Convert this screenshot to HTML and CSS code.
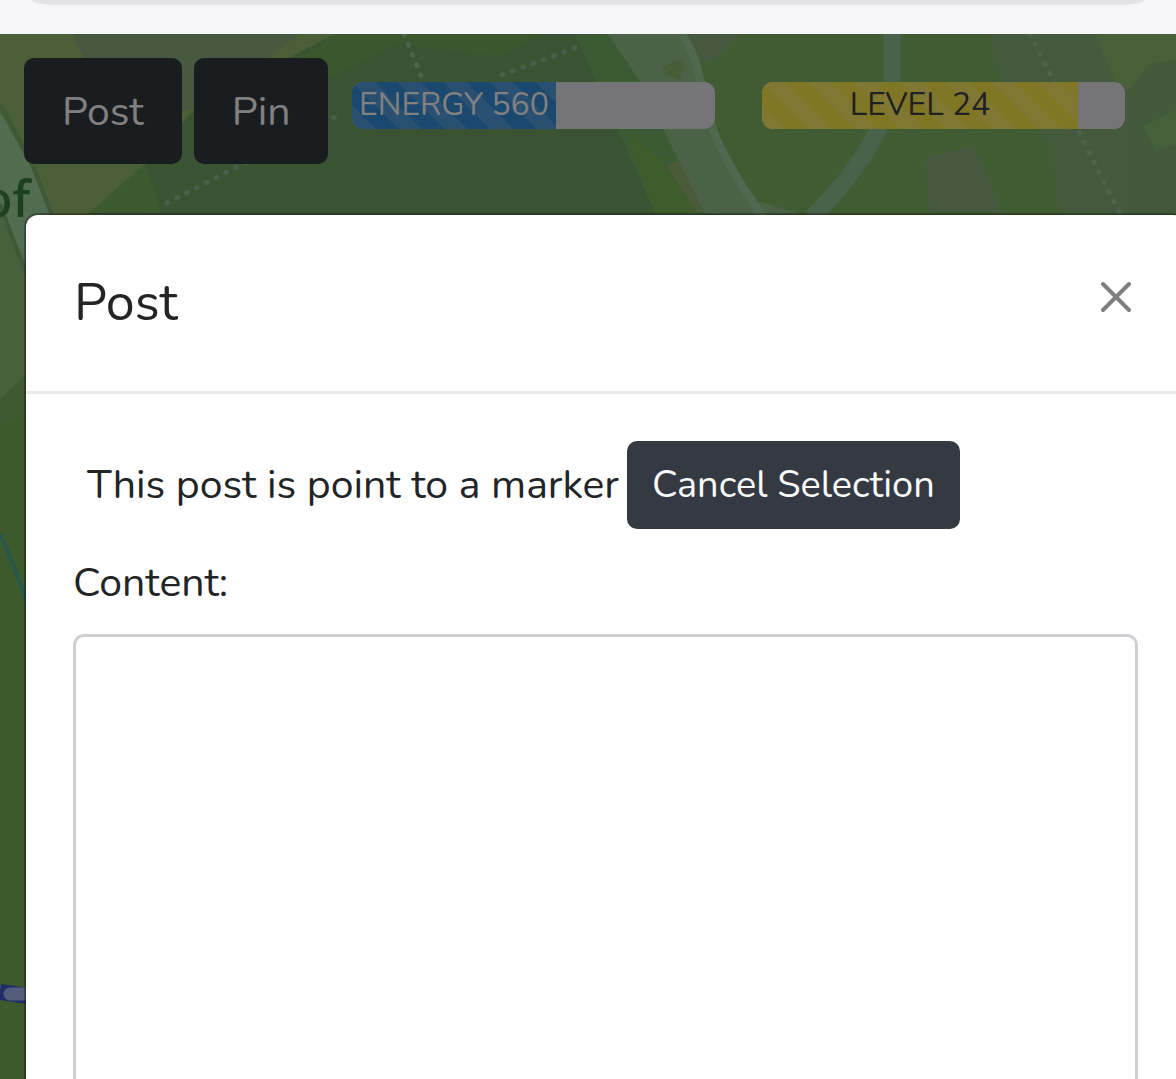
FILE: index.html
```html
<!DOCTYPE html>
<html lang="en">
<head>
<meta charset="utf-8">
<meta name="viewport" content="width=device-width, initial-scale=1">
<title>Post</title>
<link rel="stylesheet" href="styles.css">
</head>
<body>
<header class="browser-bar"><div class="address"></div></header>
<main class="world">
  <svg class="map" viewBox="0 0 1176 1045" preserveAspectRatio="xMinYMin slice" aria-hidden="true">
    <rect width="1176" height="1045" fill="#3d5a2d"/>
    <!-- woods and fields -->
    <path d="M0 0H400L90 190H0Z" fill="#4a5e38"/>
    <path d="M72 0H300L195 75H110Z" fill="#475840"/>
    <path d="M300 18L335 0H590L670 190H150L145 130L195 75Z" fill="#3a5433"/>
    <path d="M335 0H540L500 22L395 10L300 60L230 100L280 40Z" fill="#3a572e"/>
    <path d="M145 130L88 180H162Z" fill="#3c5a2d"/>
    <path d="M575 0H625L720 190H660Z" fill="#3b5b35"/>
    <path d="M625 95L665 130L698 180H655Z" fill="#3e5d2b"/>
    <path d="M680 0H1176V190H720L690 100Z" fill="#415c33"/>
    <path d="M688 0H740L715 25L700 30Z" fill="#465840"/>
    <path d="M990 0H1095L1115 45L1140 60V180H1060L1050 110L1000 45Z" fill="#45593d"/>
    <path d="M925 125L970 112L985 135L1000 178H930Z" fill="#465840"/>
    <path d="M1095 0H1176V50L1135 60L1115 48Z" fill="#485f38"/>
    <path d="M1128 57L1150 29L1176 26V180H1130Z" fill="#435939"/>
    <path d="M1143 92L1176 76V110L1156 116Z" fill="#46603a"/>
    <path d="M665 130L690 125L730 178H696Z" fill="#4b5a38"/>
    <!-- open ground by the lake -->
    <path d="M0 78L32 135L50 180L26 250L0 175Z" fill="#526c52"/>
    <path d="M0 175L26 230V340L0 370Z" fill="#48613d"/>
    <path d="M0 70L32 130L52 181M0 170L26 240" fill="none" stroke="#3f5836" stroke-width="4"/>
    <path d="M0 365L26 340V380L0 388Z" fill="#3f5a30"/>
    <!-- roads -->
    <path d="M608 0H685L700 25V80L750 165L800 180H705L668 105L645 55Z" fill="#4c6247"/>
    <path d="M662 32L684 26L680 46L668 42Z" fill="#475d38"/>
    <path d="M892 0V42C890 95 850 145 812 184" fill="none" stroke="#48634a" stroke-width="17"/>
    <path d="M682 0C705 35 700 72 720 112S745 155 765 186" fill="none" stroke="#506850" stroke-width="8"/>
    <!-- footpaths -->
    <path d="M167 169L340 80M502 41L580 12" fill="none" stroke="#46604a" stroke-width="5" stroke-linecap="round" stroke-dasharray="1 10"/>
    <path d="M404 0L422 44M1030 0L1055 50L1080 100L1120 180" fill="none" stroke="#4c6449" stroke-width="5" stroke-linecap="round" stroke-dasharray="1 10"/>
    <!-- stream and route -->
    <path d="M0 500Q16 534 28 572" fill="none" stroke="#28564a" stroke-width="4"/>
    <path d="M0 958L28 962" stroke="#202d68" stroke-width="16"/>
    <path d="M10 960H28" stroke="#555d7d" stroke-width="13" stroke-linecap="round"/>
    <text class="place" x="-18" y="183">of</text>
  </svg>
  <div class="toolbar">
    <div class="actions">
      <button class="btn btn-map" type="button">Post</button>
      <button class="btn btn-map" type="button">Pin</button>
    </div>
    <div class="meters">
      <div class="meter" role="progressbar" aria-label="Energy" aria-valuenow="56" aria-valuemin="0" aria-valuemax="100">
        <div class="fill energy" style="width:56%">ENERGY 560</div>
      </div>
      <div class="meter" role="progressbar" aria-label="Level" aria-valuenow="87" aria-valuemin="0" aria-valuemax="100">
        <div class="fill level" style="width:87%">LEVEL 24</div>
      </div>
    </div>
  </div>
  <section class="modal" role="dialog" aria-labelledby="modal-title">
    <div class="modal-header">
      <h1 id="modal-title">Post</h1>
      <button class="close" type="button" aria-label="Close">
        <svg viewBox="0 0 32 32" width="32" height="32"><path d="M4 3L30 29M30 3L4 29" fill="none" stroke="#7f7f7f" stroke-width="4" stroke-linecap="round"/></svg>
      </button>
    </div>
    <form class="modal-body">
      <div class="target">
        <span>This post is point to a marker</span>
        <button class="btn btn-cancel" type="button">Cancel Selection</button>
      </div>
      <label for="content">Content:</label>
      <textarea id="content"></textarea>
    </form>
  </section>
</main>
</body>
</html>
```
FILE: styles.css
```css
* { box-sizing: border-box; }

body {
  margin: 0;
  height: 100vh;
  overflow: hidden;
  display: flex;
  flex-direction: column;
  font-family: Nunito, "Noto Sans", sans-serif;
  font-size: 41px;
  line-height: 60px;
  color: #222426;
}

button, textarea { font: inherit; }

.browser-bar {
  flex: none;
  height: 34px;
  padding: 0 32px;
  background: #f6f6f8;
}

.address {
  height: 5px;
  background: #e3e3e7;
  border-radius: 0 0 24px 24px / 0 0 5px 5px;
}

.world {
  position: relative;
  flex: 1;
  min-height: 0;
  overflow: hidden;
  background: #3d5a2d;
}

.map {
  position: absolute;
  inset: 0;
  width: 100%;
  height: 100%;
}

.place {
  font-family: "Noto Sans", sans-serif;
  font-size: 50px;
  font-weight: 500;
  fill: #1d4020;
}

.toolbar {
  position: relative;
  display: flex;
  gap: 24px;
  padding: 24px 51px 0 24px;
}

.actions { display: flex; gap: 12px; }

.btn {
  border: 0;
  border-radius: 10px;
  white-space: nowrap;
}

.btn-map {
  height: 106px;
  padding: 2px 38px 0;
  background: #1a1d20;
  color: #808080;
}

.meters {
  flex: 1;
  display: grid;
  grid-template-columns: 1fr 1fr;
  gap: 47px;
  padding-top: 24px;
}

.meter {
  height: 47px;
  overflow: hidden;
  background: #757578;
  border-radius: 11px;
}

.fill {
  height: 100%;
  background-image: linear-gradient(45deg, rgba(128, 128, 128, .15) 25%, transparent 25%, transparent 50%, rgba(128, 128, 128, .15) 50%, rgba(128, 128, 128, .15) 75%, transparent 75%);
  background-size: 46px 46px;
  font-size: 32px;
  line-height: 45px;
  text-align: center;
  white-space: nowrap;
}

.energy { background-color: #1a486e; color: #808080; }
.level { background-color: #807725; color: #212121; }

.modal {
  position: relative;
  margin: 51px -9px 0 26px;
  background: #fff;
  border-radius: 12px 12px 0 0;
  box-shadow: 0 0 0 2px rgba(0, 0, 0, .3);
}

.modal-header {
  display: flex;
  justify-content: space-between;
  align-items: flex-start;
  padding: 48px 48px 48px;
  border-bottom: 3px solid #e9e9eb;
}

h1 {
  margin: 0;
  font-size: 52px;
  font-weight: 400;
  line-height: 80px;
}

.close {
  display: flex;
  margin: 0;
  padding: 18px 6px;
  border: 0;
  background: none;
}

.modal-body {
  display: flex;
  flex-direction: column;
  padding: 47px 47px;
}

.target {
  display: flex;
  align-items: center;
  gap: 8px;
  padding-left: 14px;
  margin-bottom: 24px;
}

.btn-cancel {
  height: 88px;
  padding: 0 25px;
  background: #353942;
  color: #f8fafc;
  font-size: 38px;
}

label { margin-bottom: 21px; }

textarea {
  height: 60vh;
  padding: 16px 30px;
  border: 3px solid #ced0d4;
  border-radius: 11px;
  background: #fff;
  resize: none;
}
```
